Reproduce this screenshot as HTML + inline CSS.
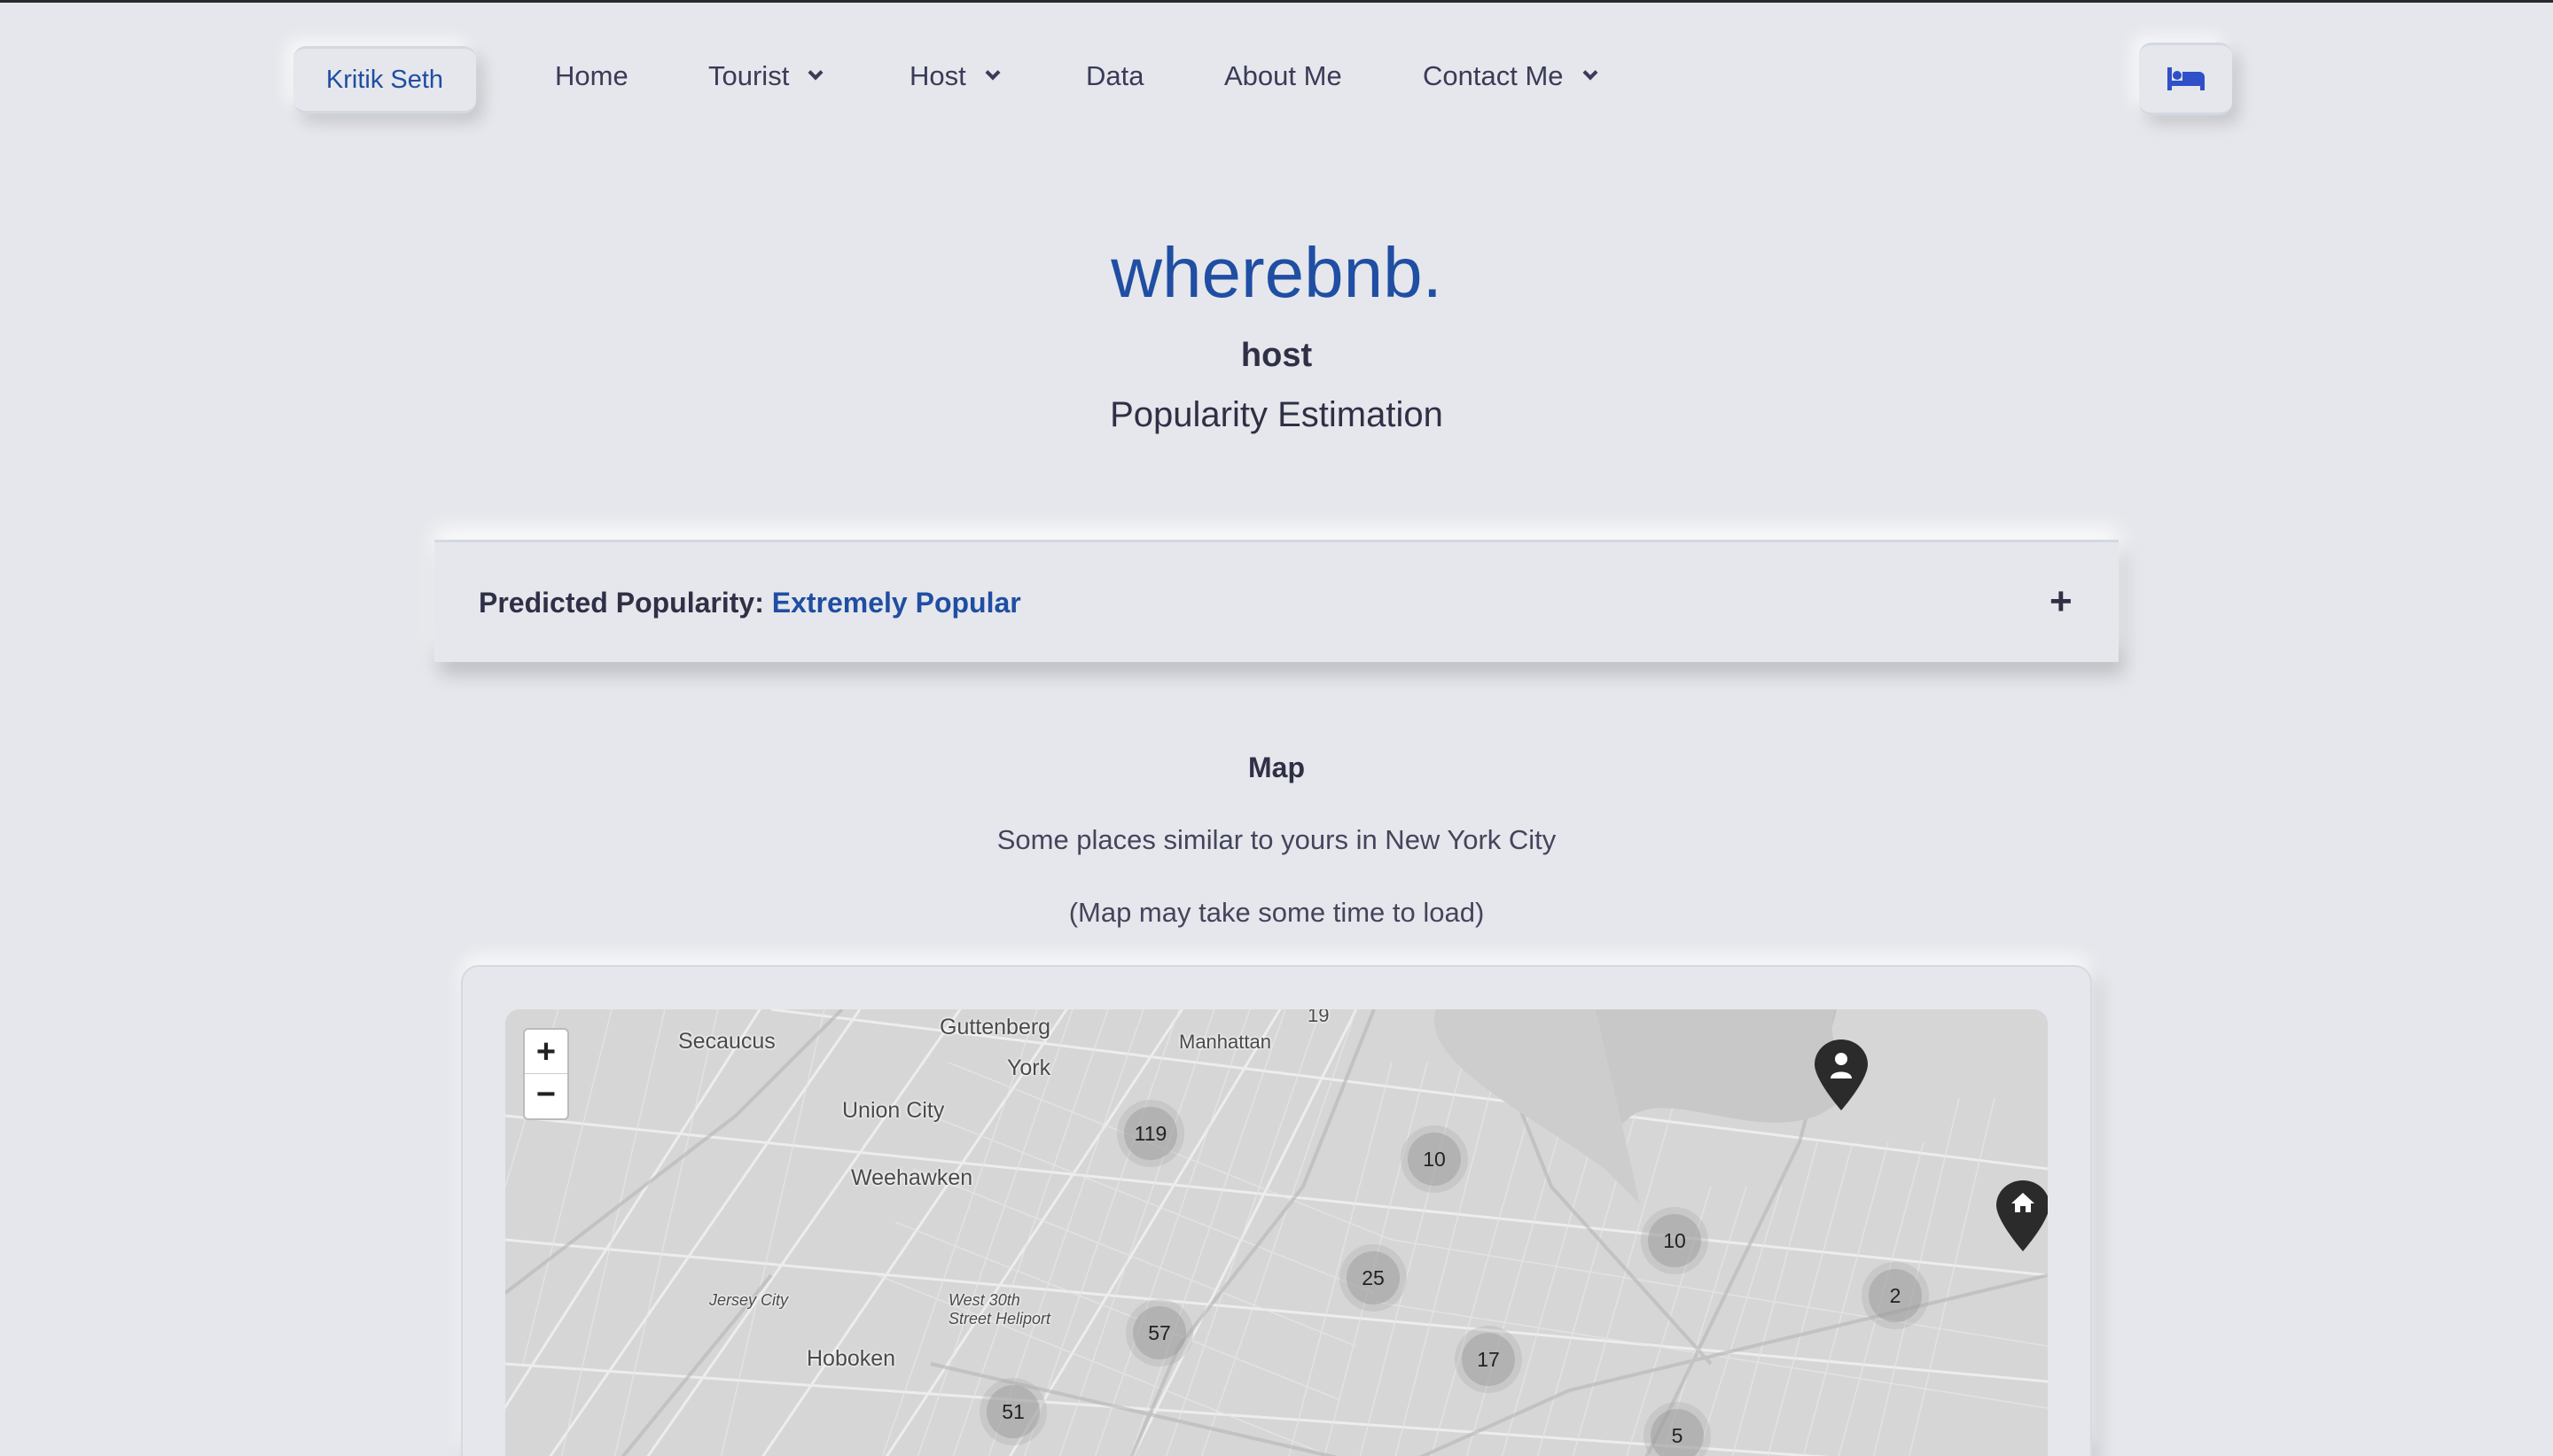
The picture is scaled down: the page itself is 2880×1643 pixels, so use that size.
<!DOCTYPE html>
<html><head><meta charset="utf-8">
<style>
*{margin:0;padding:0;box-sizing:border-box}
html,body{width:2880px;height:1643px;overflow:hidden;background:#e6e7ec;font-family:"Liberation Sans",Arial,sans-serif;color:#2f3046}
.topline{position:absolute;left:0;top:0;width:2880px;height:3px;background:#2a2a2a}
.abs{position:absolute}
.btn{background:#e6e7ec;border-top:3px solid #d3d8e2;border-bottom:3px solid #d3d8e2;border-radius:14px;box-shadow:-8px -8px 18px rgba(255,255,255,.7),8px 10px 18px rgba(0,0,0,.15)}
.nav{top:68px;font-size:31px;color:#3a3b57}
.chev{display:inline-block;width:12px;height:12px;border-right:4px solid #3a3b57;border-bottom:4px solid #3a3b57;transform:rotate(45deg);margin-left:24px;position:relative;top:-8px}
.c{position:absolute;left:0;width:2880px;text-align:center}
.cl{position:absolute;border-radius:50%;background:rgba(170,170,170,.3);display:flex;align-items:center;justify-content:center}
.cl span{width:60px;height:60px;border-radius:50%;background:rgba(150,150,150,.45);display:flex;align-items:center;justify-content:center;font-size:23px;color:#222}
.lb{position:absolute;font-size:25px;color:#4a4a4a;text-shadow:0 0 3px #fff,0 0 3px #fff}
</style></head><body>
<div class="topline"></div>
<div class="abs btn" style="left:331px;top:52px;width:206px;height:76px;font-size:29px;color:#1f4ea3;display:flex;align-items:center;justify-content:center">Kritik Seth</div>
<div class="abs nav" style="left:626px">Home</div>
<div class="abs nav" style="left:799px">Tourist<span class="chev"></span></div>
<div class="abs nav" style="left:1026px">Host<span class="chev"></span></div>
<div class="abs nav" style="left:1225px">Data</div>
<div class="abs nav" style="left:1381px">About Me</div>
<div class="abs nav" style="left:1605px">Contact Me<span class="chev"></span></div>
<div class="abs btn" style="left:2413px;top:48px;width:105px;height:82px;display:flex;align-items:center;justify-content:center">
<svg width="42" height="26" viewBox="0 0 42 26"><rect x="0" y="0" width="5" height="26" fill="#3050c8"/><circle cx="11" cy="9" r="5" fill="#3050c8"/><path d="M17 5h19a6 6 0 0 1 6 6v15h-5v-5H5v-5h12z" fill="#3050c8"/><rect x="5" y="15" width="37" height="6" fill="#3050c8"/></svg></div>

<div class="c" style="top:262px;font-size:80px;color:#1f4ea3">wherebnb.</div>
<div class="c" style="top:380px;font-size:38px;font-weight:bold">host</div>
<div class="c" style="top:446px;font-size:40px">Popularity Estimation</div>

<div class="abs" style="left:490px;top:609px;width:1900px;height:138px;background:#e6e7ec;border-top:3px solid #d3d8e2;box-shadow:0 -14px 22px rgba(255,255,255,.8),6px 14px 20px rgba(0,0,0,.18)">
<div class="abs" style="left:50px;top:50px;font-size:32px;font-weight:bold">Predicted Popularity: <span style="color:#1f4ea3">Extremely Popular</span></div>
<div class="abs" style="left:1822px;top:42px;font-size:44px;font-weight:bold">+</div>
</div>

<div class="c" style="top:848px;font-size:32px;font-weight:bold">Map</div>
<div class="c" style="top:930px;font-size:31px;color:#44455c">Some places similar to yours in New York City</div>
<div class="c" style="top:1012px;font-size:31px;color:#44455c">(Map may take some time to load)</div>

<div class="abs" style="left:520px;top:1089px;width:1840px;height:554px;border-radius:20px 20px 0 0;background:#e6e7ec;border:2px solid #d6d9e2;border-bottom:none;box-shadow:0 -10px 20px rgba(255,255,255,.8),8px 8px 20px rgba(0,0,0,.15)"></div>
<div class="abs" style="left:570px;top:1139px;width:1740px;height:504px;border-radius:16px 16px 0 0;overflow:hidden;background:#d6d6d6">
<svg width="1740" height="504" style="position:absolute;left:0;top:0">
<g stroke="#f0f0f0" stroke-width="3" fill="none" opacity=".9">
<path d="M-20 480L300 -20M40 520L400 0M150 520L520 -10M280 520L640 -10M420 520L770 -10M560 520L880 -10M700 520L960 0"/>
<path d="M0 120L1740 300M0 260L1740 420M0 400L1700 520M300 0L1740 180"/>
</g>
<g stroke="#e6e6e6" stroke-width="1.5" opacity=".8">
<path d="M600 0L420 520M640 0L460 520M680 0L500 520M720 0L540 520M760 0L580 520M800 0L620 520M840 0L660 520M880 0L700 520M920 0L740 520M960 0L780 520M1000 60L880 520M1040 60L920 520M1080 60L960 520M1120 60L1000 520M1160 100L1040 520M1200 100L1080 520M1240 100L1120 520M1280 100L1160 520M1320 100L1200 520M1360 200L1260 520M1400 200L1300 520M1440 200L1340 520M1480 150L1380 520M1520 150L1420 520M1560 150L1460 520M1600 150L1500 520M1640 100L1540 520M1680 100L1580 520"/>
<path d="M500 60L1000 260M480 120L980 320M460 180L960 380M440 240L940 440M420 300L920 500M1000 260L1740 380M980 330L1740 450"/>
<path d="M60 0L0 200M120 0L20 400M180 0L60 520M240 0L120 520M360 0L240 520"/>
</g>
<g stroke="#b4b4b4" stroke-width="4" fill="none" opacity=".6">
<path d="M0 320L260 120L380 0M120 520L300 300M700 520L760 380L900 200L980 0M1000 520L1200 430L1740 300M1100 0L1180 200L1360 400M1280 520L1460 150L1500 0M480 400L1000 520"/>
</g>
<path d="M1500 0C1480 60 1560 80 1480 120 1400 150 1300 80 1260 130L1220 0z" fill="#c8c8c8"/>
<path d="M1050 0C1030 60 1160 120 1240 180L1280 220 1230 0z" fill="#cdcdcd"/>
</svg>
<div class="cl" style="left:690px;top:102px;width:76px;height:76px"><span>119</span></div>
<div class="cl" style="left:1010px;top:131px;width:76px;height:76px"><span>10</span></div>
<div class="cl" style="left:941px;top:265px;width:76px;height:76px"><span>25</span></div>
<div class="cl" style="left:1281px;top:223px;width:76px;height:76px"><span>10</span></div>
<div class="cl" style="left:1530px;top:285px;width:76px;height:76px"><span>2</span></div>
<div class="cl" style="left:700px;top:327px;width:76px;height:76px"><span>57</span></div>
<div class="cl" style="left:1071px;top:357px;width:76px;height:76px"><span>17</span></div>
<div class="cl" style="left:535px;top:416px;width:76px;height:76px"><span>51</span></div>
<div class="cl" style="left:1284px;top:443px;width:76px;height:76px"><span>5</span></div>
<div class="lb" style="left:195px;top:22px">Secaucus</div>
<div class="lb" style="left:490px;top:6px">Guttenberg</div>
<div class="lb" style="left:566px;top:52px">York</div>
<div class="lb" style="left:760px;top:24px;font-size:22px">Manhattan</div>
<div class="lb" style="left:380px;top:100px">Union City</div>
<div class="lb" style="left:390px;top:176px">Weehawken</div>
<div class="lb" style="left:340px;top:380px">Hoboken</div>
<div class="lb" style="left:230px;top:318px;font-size:18px;font-style:italic">Jersey City</div>
<div class="lb" style="left:500px;top:318px;font-size:18px;font-style:italic">West 30th<br>Street Heliport</div>
<div class="lb" style="left:905px;top:-6px;font-size:22px">19</div>
<svg class="abs" style="left:1477px;top:34px" width="60" height="80" viewBox="0 0 60 80"><path d="M30 0C13 0 0 13 0 28c0 18 30 52 30 52s30-34 30-52C60 13 47 0 30 0z" fill="#2b2b2b"/><circle cx="30" cy="22" r="7" fill="#fff"/><path d="M18 44c0-10 24-10 24 0z" fill="#fff"/></svg>
<svg class="abs" style="left:1682px;top:193px" width="60" height="80" viewBox="0 0 60 80"><path d="M30 0C13 0 0 13 0 28c0 18 30 52 30 52s30-34 30-52C60 13 47 0 30 0z" fill="#2b2b2b"/><path d="M30 14L17 26h4v10h6v-7h6v7h6V26h4z" fill="#fff"/></svg>
<div class="abs" style="left:20px;top:21px;width:52px;height:104px;background:#fff;border-radius:6px;border:2px solid #bbb">
<div style="height:50px;border-bottom:1px solid #ccc;font-size:38px;font-weight:bold;text-align:center;line-height:50px;color:#222">+</div>
<div style="height:50px;font-size:38px;font-weight:bold;text-align:center;line-height:46px;color:#222">−</div>
</div>
</div>
</body></html>
